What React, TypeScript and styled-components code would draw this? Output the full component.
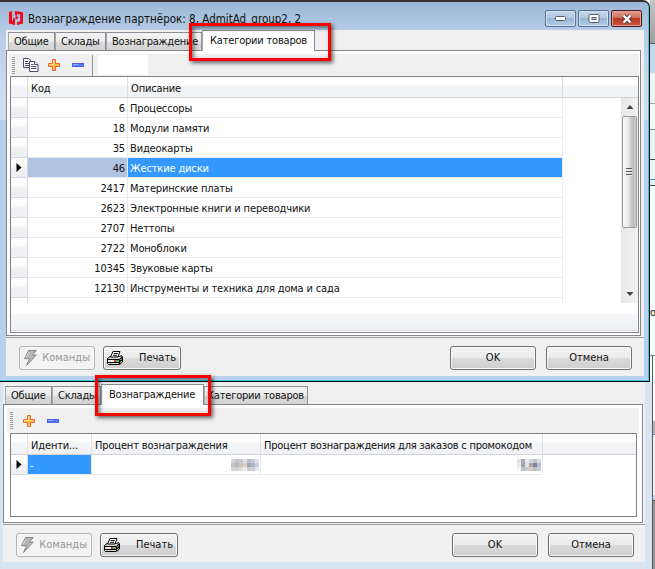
import React from 'react';
import styled, { createGlobalStyle, css } from 'styled-components';

const GlobalStyle = createGlobalStyle`
  *, *::before, *::after { box-sizing: border-box; }
  body { margin: 0; overflow: hidden; background: #fff; }
  #root { font: 11px/14px "DejaVu Sans Condensed", "DejaVu Sans", sans-serif; font-stretch: condensed; color: #111; }
`;

const Desktop = styled.div`
  position: relative;
  width: 655px;
  height: 569px;
  overflow: hidden;
  background: #fff;
`;

/* ---------- sliver of the windows lying behind ---------- */

const Backdrop = styled.div`
  position: absolute;
  top: 0;
  right: 0;
  width: 5px;
  height: 569px;
  display: flex;
  flex-direction: column;
`;

const Strip = styled.div<{ $h: number; $bg: string; $line?: string; $edge?: boolean }>`
  flex: none;
  height: ${p => p.$h}px;
  background: ${p => p.$bg};
  border-bottom: 1px solid ${p => p.$line || 'transparent'};
  overflow: hidden;
  line-height: 14px;
  ${p => p.$edge && css`margin-left: 2px; border-left: 1px solid #55585c;`}
`;

/* ---------- windows ---------- */

const MainWindow = styled.section`
  position: absolute;
  left: 0;
  top: 0;
  width: 650px;
  height: 382px;
  display: flex;
  flex-direction: column;
  padding: 0 5px 5px 6px;
  border: solid #07080a;
  border-width: 2px 1px 1px 0;
  border-top-color: #392f34;
  border-top-right-radius: 7px;
  box-shadow: inset -1px -1px 0 #35cfdf;
  background: linear-gradient(#9cb7d3 0, #a5bfdc 12px, #b5cbe5 28px, #cbdcef 88px, #d0e0f3 117px, #b9d0ec 119px);
`;

const TitleBar = styled.header`
  height: 28px;
  flex: none;
  display: flex;
  align-items: flex-start;
  padding: 7px 2px 0 2px;
`;

const Title = styled.h1`
  margin: 1px 0 0 4px;
  flex: 1;
  font: inherit;
  font-size: 11.5px;
  line-height: 18px;
  white-space: nowrap;
`;

const Controls = styled.div`
  display: flex;
  gap: 2px;
  margin-top: 1px;
`;

const Control = styled.button<{ $danger?: boolean }>`
  width: 31px;
  height: 17px;
  padding: 0;
  display: grid;
  place-items: center;
  border: 1px solid ${p => (p.$danger ? '#4d1721' : '#5b708c')};
  border-radius: 2px;
  box-shadow: inset 0 0 0 1px ${p => (p.$danger ? '#e3a194' : '#d2e1f2')};
  background: ${p =>
    p.$danger
      ? 'linear-gradient(#e09a8b 0, #cf6f5c 46%, #b53823 50%, #cb5740 100%)'
      : 'linear-gradient(#c3d5e9 0, #b2c9e2 46%, #96b3d2 50%, #b3cde8 100%)'};
`;

const Client = styled.div`
  flex: 1;
  min-height: 0;
  display: flex;
  flex-direction: column;
  background: #f0f0f0;
`;

const BackWindow = styled.section`
  position: absolute;
  left: 0;
  top: 382px;
  width: 653px;
  height: 187px;
  padding: 0 7px 7px 3px;
  display: flex;
  border-right: 1px solid #55585c;
  background: #d8e4f2;
`;

/* ---------- tabs ---------- */

const Tabs = styled.nav<{ $h: number; $left: number }>`
  height: ${p => p.$h}px;
  flex: none;
  display: flex;
  align-items: flex-end;
  padding-left: ${p => p.$left}px;
`;

const Tab = styled.button<{ $w: number; $active?: boolean; $track?: number; $indent?: number }>`
  width: ${p => p.$w}px;
  height: 18px;
  padding: 1px 0 0 ${p => p.$indent ?? 5}px;
  border: 1px solid #8b8e96;
  border-bottom: 0;
  border-left-color: #a5a7ad;
  background: linear-gradient(#f3f3f3 0, #ebebeb 50%, #dcdcdc 52%, #d1d1d1 100%);
  font: inherit;
  letter-spacing: ${p => p.$track ?? -0.2}px;
  text-align: left;
  white-space: nowrap;
  color: #111;
  ${p =>
    p.$active &&
    css`
      position: relative;
      z-index: 1;
      height: 21px;
      margin-bottom: -1px;
      padding: 0 0 1px 7px;
      background: #fff;
    `}
`;

const Panel = styled.div<{ $w: number; $h: number; $pad: string }>`
  width: ${p => p.$w}px;
  height: ${p => p.$h}px;
  padding: ${p => p.$pad};
  flex: none;
  display: flex;
  flex-direction: column;
  border: 1px solid #85878d;
  background: #fff;
`;

const Toolbar = styled.div<{ $h: number }>`
  height: ${p => p.$h}px;
  flex: none;
  display: flex;
  align-items: center;
  padding-left: 3px;
  background: #f0f0f0;
`;

const Grip = styled.i<{ $mr: number }>`
  width: 3px;
  height: 17px;
  margin-right: ${p => p.$mr}px;
  background: repeating-linear-gradient(#9b9b9b 0 1px, #f0f0f0 1px 2px);
`;

const ToolIcon = styled.span<{ $mr: number }>`
  display: flex;
  margin-right: ${p => p.$mr}px;
`;

const Divider = styled.i`
  width: 1px;
  height: 21px;
  background: #8f8f8f;
`;

const SearchField = styled.i`
  width: 50px;
  height: 20px;
  margin-left: 5px;
  background: #fff;
`;

/* ---------- grids ---------- */

const Table = styled.div<{ $h: number; $cols: string; $ml: number; $mr: number }>`
  --cols: ${p => p.$cols};
  height: ${p => p.$h}px;
  margin: 0 ${p => p.$mr}px 0 ${p => p.$ml}px;
  flex: none;
  display: flex;
  flex-direction: column;
  border: 1px solid #7f828a;
  background: #fff;
`;

const Head = styled.div`
  height: 21px;
  flex: none;
  display: grid;
  grid-template-columns: var(--cols) 1fr;
  border-bottom: 1px solid #d2d4d7;
  background: linear-gradient(#fff 0, #fcfcfd 38%, #f2f4f6 45%, #eff1f4 100%);
`;

const HeadCell = styled.div<{ $track?: number }>`
  padding: 5px 0 0 3px;
  border-right: 1px solid #dcdee2;
  letter-spacing: ${p => p.$track ?? -0.15}px;
  white-space: nowrap;
  overflow: hidden;
  &:last-child { border: 0; }
`;

const Body = styled.div`
  display: flex;
  height: 205px;
  overflow: hidden;
`;

const Rows = styled.div`
  flex: 1;
`;

const Row = styled.div`
  display: grid;
  grid-template-columns: var(--cols) 1fr;
  height: 20px;
`;

const Marker = styled.div`
  display: flex;
  align-items: center;
  justify-content: center;
  border: solid #d5d7db;
  border-width: 0 1px 1px 0;
  background: linear-gradient(#fff 0, #fafafb 45%, #f0f1f3 52%, #eeeff2 100%);
`;

const Cell = styled.div<{ $tone?: 'pale' | 'blue'; $right?: boolean; $track?: number }>`
  padding: 4px 2px 0;
  border: solid #e8e9ec;
  border-width: 0 1px 1px 0;
  letter-spacing: ${p => p.$track ?? -0.15}px;
  white-space: nowrap;
  ${p => p.$right && css`display: flex; justify-content: flex-end;`}
  ${p => p.$tone === 'pale' && css`background: #afc2df;`}
  ${p => p.$tone === 'blue' && css`background: #3399ff; color: #fff;`}
`;

const Summary = styled.div`
  flex: none;
  height: 18px;
  margin: 10px 1px 0 0;
  background: linear-gradient(#f6f7f8, #eff1f4);
  border-bottom: 1px solid #d9dbdf;
`;

const Scrollbar = styled.div`
  width: 17px;
  display: flex;
  flex-direction: column;
  padding: 0 1px 0 1px;
  background: linear-gradient(90deg, #e7e7e7, #f2f2f2);
`;

const ScrollArrow = styled.span<{ $end?: boolean }>`
  height: 18px;
  display: grid;
  place-items: center;
  margin-top: ${p => (p.$end ? 'auto' : 0)};
`;

const Thumb = styled.div`
  height: 112px;
  display: grid;
  place-items: center;
  border: 1px solid #9a9a9a;
  border-radius: 2px;
  background: linear-gradient(90deg, #f7f7f7 0, #e8e8e8 45%, #cfcfd1 55%, #bebec2 80%, #d2d2d4 100%);
`;

const Mosaic = styled.div<{ $cols: number }>`
  width: ${p => p.$cols * 4}px;
  height: 12px;
  margin-right: -1px;
  display: grid;
  grid-template-columns: repeat(${p => p.$cols}, 4px);
  grid-auto-rows: 4px;
`;

const Tile = styled.i<{ $c: string }>`
  background: ${p => p.$c};
`;

/* ---------- footer ---------- */

const Footer = styled.footer<{ $pad: string }>`
  flex: 1;
  margin-top: 1px;
  display: flex;
  padding: ${p => p.$pad};
  border-top: 1px solid #9b9da2;
`;

const PushButton = styled.button<{ $w: number; $ml?: string; $muted?: boolean; $icon?: boolean }>`
  width: ${p => p.$w}px;
  height: 24px;
  margin-left: ${p => p.$ml ?? '0'};
  padding: 0 ${p => (p.$icon ? '4px 0 2px' : 0)};
  flex: none;
  display: flex;
  align-items: center;
  justify-content: ${p => (p.$icon ? 'space-between' : 'center')};
  border: 1px solid ${p => (p.$muted ? '#b3b5b9' : '#707070')};
  border-radius: 3px;
  box-shadow: inset 0 0 0 1px #f9f9f9;
  background: ${p => (p.$muted ? '#f3f3f3' : 'linear-gradient(#f3f3f3 0, #ebebeb 48%, #dadada 52%, #cecece 100%)')};
  font: inherit;
  color: ${p => (p.$muted ? '#989898' : '#111')};
`;

const Callout = styled.div<{ $x: number; $y: number; $w: number; $h: number }>`
  position: absolute;
  z-index: 3;
  left: ${p => p.$x}px;
  top: ${p => p.$y}px;
  width: ${p => p.$w}px;
  height: ${p => p.$h}px;
  border: 3px solid #fb0000;
  box-shadow: 2px 2px 4px rgba(0, 0, 0, 0.6), inset 2px 2px 4px rgba(0, 0, 0, 0.5);
  pointer-events: none;
`;

/* ---------- icons ---------- */

const Logo = () => (
  <svg width="16" height="17" viewBox="0 0 16 17" fill="#f4091b">
    <path d="M1 3L4 2V11.5L5 12V9L7 9.8V16L1 14.5z" />
    <path d="M7 2L15 3.2V14.5L9 16V13.2L12.2 12.2V5.6L9 5V7L7 6.3z" />
    <path d="M8.6 7L10.4 8.8L8.6 10.6L6.8 8.8z" />
  </svg>
);

const Copy = () => (
  <svg width="16" height="14" viewBox="0 0 16 14" fill="#fff" stroke="#4b4b74">
    <path d="M.5.5h5.3l2.7 2.7v6.3h-8z" />
    <path d="M2 3.5h3M2 5.5h5M2 7.5h5" />
    <path d="M6.5 3.5h5.2l3.3 3v7H6.5z" />
    <path d="M11.5 3.5v3H15M8 6.5h2.5M8 8.5h5.5M8 10.5h5.5" />
  </svg>
);

const Plus = () => (
  <svg width="12" height="12" viewBox="0 0 12 12">
    <path d="M4.5.5h3v4h4v3h-4v4h-3v-4h-4v-3h4z" fill="#ffc344" stroke="#f2603c" />
    <path d="M5.5 1v4.5H1" fill="none" stroke="#ffe081" />
  </svg>
);

const Minus = () => (
  <svg width="12" height="4" viewBox="0 0 12 4">
    <rect x=".5" y=".5" width="11" height="3" fill="#517dff" stroke="#5558ee" />
    <path d="M1 1.5h5" stroke="#7fb4ff" />
  </svg>
);

const Bolt = () => (
  <svg width="17" height="18" viewBox="0 0 17 18">
    <path d="M6.5 1.5h7.7L10.5 6h3.8L4.5 16.5l3-6.8H2.5z" fill="#b5b5b5" stroke="#898989" />
    <path d="M7 3L4 8.5" stroke="#ddd" />
  </svg>
);

const Printer = () => (
  <svg width="18" height="16" viewBox="0 0 18 16">
    <path d="M1.5 8.5L4 6.5h9.5l2-1 1 1.5v5l-3 2.5h-11l-1-1z" fill="#d8d8d0" stroke="#000" />
    <path d="M4.5 7L7 1.5h7L12 7z" fill="#fff" stroke="#000" />
    <path d="M7.7 3.5h4M7 5.3h4" stroke="#111" />
    <path d="M2 9.5h11.5M2 12.5h11.5M13.5 9.5v4.5M14 9l2.5-2M14 11.5l2.5-2" stroke="#000" strokeWidth="1.2" />
    <path d="M3 11h5" stroke="#fff" />
    <path d="M8 11h2.5" stroke="#e21818" strokeWidth="1.8" />
    <path d="M10.5 11h2.5" stroke="#1fc63e" strokeWidth="1.8" />
  </svg>
);

const Pointer = () => (
  <svg width="6" height="9" viewBox="0 0 6 9"><path d="M.5 0v9L5.5 4.5z" fill="#000" /></svg>
);

const Arrow = ({ down }: { down?: boolean }) => (
  <svg width="8" height="4" viewBox="0 0 8 4"><path d={down ? 'M.5 0h7L4 4z' : 'M.5 4h7L4 0z'} fill="#404040" /></svg>
);

/* ---------- data ---------- */

const goods: [number, string][] = [
  [6, 'Процессоры'],
  [18, 'Модули памяти'],
  [35, 'Видеокарты'],
  [46, 'Жесткие диски'],
  [2417, 'Материнские платы'],
  [2623, 'Электронные книги и переводчики'],
  [2707, 'Неттопы'],
  [2722, 'Моноблоки'],
  [10345, 'Звуковые карты'],
  [12130, 'Инструменты и техника для дома и сада'],
];

const tilesA = ['#d6d3d3', '#bcc4cf', '#c7cbd1', '#dfdfdf', '#b5bfcc', '#c5cad8', '#dee5ef',
  '#c9c2bc', '#b3b8c0', '#c9c6c2', '#d6cfc6', '#a9a9ac', '#aab6d0', '#c3d2e6',
  '#d6d3ce', '#ccd0d7', '#dedcda', '#eeeae5', '#c9cbd0', '#c9cfd9', '#e3e7ee'];
const tilesB = ['#e5e2df', '#aaa9b6', '#e3e6ec', '#d0d5de', '#bfc2cd', '#d7dae2',
  '#eee9e5', '#9e9fb0', '#dbe2eb', '#b7a999', '#7f87a0', '#b9bfce',
  '#f4f2f0', '#c2c1c8', '#c5cad4', '#d4cdc3', '#b8bfcf', '#c9c9d0'];

const App = () => (
  <>
    <GlobalStyle />
    <Desktop>
      <Backdrop>
        <Strip $h={44} $bg="linear-gradient(#c5c5c5, #9e9e9e)" $line="#5d5d5d" />
        <Strip $h={60} $bg="linear-gradient(#c6d6e9 0 28px, #f3f3f3 30px)" $line="#a9a9a9" />
        <Strip $h={26} $bg="#fafafa" $line="#909090" />
        <Strip $h={30} $bg="#f0f0f0" $line="#454545" />
        <Strip $h={20} $bg="#f3f3f3" $line="#3f8fda" />
        <Strip $h={6} $bg="#f0f0f0" $line="#333" />
        <Strip $h={120} $bg="#fff" />
        <Strip $h={14} $bg="#fff">о</Strip>
        <Strip $h={36} $bg="#fff" $line="#777" />
        <Strip $h={65} $bg="#fff" $edge />
        <Strip $h={14} $bg="#b4b4b4" $line="#4489d0" />
        <Strip $h={60} $bg="#f0f0f0" />
        <Strip $h={6} $bg="#c7daf0" $line="#444" />
        <Strip $h={68} $bg="#989898" />
      </Backdrop>

      <BackWindow>
        <Client>
          <Tabs $h={22} $left={2}>
            <Tab $w={47}>Общие</Tab>
            <Tab $w={49}>Склады</Tab>
            <Tab $w={103} $active>Вознаграждение</Tab>
            <Tab $w={104} $indent={2}>Категории товаров</Tab>
          </Tabs>
          <Panel $w={640} $h={119} $pad="3px 3px 0 3px">
            <Toolbar $h={25}>
              <Grip $mr={10} />
              <ToolIcon $mr={12}><Plus /></ToolIcon>
              <ToolIcon $mr={0}><Minus /></ToolIcon>
            </Toolbar>
            <Table $h={84} $cols="17px 64px 169px 282px" $ml={3} $mr={2}>
              <Head>
                <HeadCell />
                <HeadCell>Иденти...</HeadCell>
                <HeadCell>Процент вознаграждения</HeadCell>
                <HeadCell $track={-0.22}>Процент вознаграждения для заказов с промокодом</HeadCell>
                <HeadCell />
              </Head>
              <Row>
                <Marker><Pointer /></Marker>
                <Cell $tone="blue">-</Cell>
                <Cell $right><Mosaic $cols={7}>{tilesA.map((c, i) => <Tile key={i} $c={c} />)}</Mosaic></Cell>
                <Cell $right><Mosaic $cols={6}>{tilesB.map((c, i) => <Tile key={i} $c={c} />)}</Mosaic></Cell>
              </Row>
            </Table>
          </Panel>
          <Footer $pad="8px 11px 0 13px">
            <PushButton $w={76} $muted $icon><Bolt />Команды</PushButton>
            <PushButton $w={78} $ml="8px" $icon><Printer />Печать</PushButton>
            <PushButton $w={86} $ml="auto">OK</PushButton>
            <PushButton $w={86} $ml="10px">Отмена</PushButton>
          </Footer>
        </Client>
      </BackWindow>

      <MainWindow>
        <TitleBar>
          <Logo />
          <Title>Вознаграждение партнёрок: 8, AdmitAd_group2, 2</Title>
          <Controls>
            <Control aria-label="Свернуть">
              <svg width="12" height="6"><rect x=".5" y=".5" width="10" height="4" rx="1" fill="#fff" stroke="#59616e" /></svg>
            </Control>
            <Control aria-label="Развернуть">
              <svg width="12" height="10"><rect x="1" y=".5" width="10" height="8" rx="1" fill="#fff" stroke="#59616e" /><rect x="4" y="3.5" width="4" height="2" fill="#a9c1dd" stroke="#59616e" /></svg>
            </Control>
            <Control $danger aria-label="Закрыть">
              <svg width="12" height="10" viewBox="0 0 12 10"><path d="M2.5 1.5l7 7M9.5 1.5l-7 7" stroke="#5e4248" strokeWidth="4" /><path d="M2.5 1.5l7 7M9.5 1.5l-7 7" stroke="#fff" strokeWidth="2.3" /></svg>
            </Control>
          </Controls>
        </TitleBar>
        <Client>
          <Tabs $h={20} $left={2}>
            <Tab $w={47}>Общие</Tab>
            <Tab $w={51}>Склады</Tab>
            <Tab $w={96}>Вознаграждение</Tab>
            <Tab $w={113} $active>Категории товаров</Tab>
          </Tabs>
          <Panel $w={635} $h={286} $pad="3px 1px 0 2px">
            <Toolbar $h={22}>
              <Grip $mr={8} />
              <ToolIcon $mr={9}><Copy /></ToolIcon>
              <ToolIcon $mr={12}><Plus /></ToolIcon>
              <ToolIcon $mr={8}><Minus /></ToolIcon>
              <Divider />
              <SearchField />
            </Toolbar>
            <Table $h={257} $cols="17px 100px 435px" $ml={1} $mr={0}>
              <Head>
                <HeadCell />
                <HeadCell>Код</HeadCell>
                <HeadCell>Описание</HeadCell>
                <HeadCell />
              </Head>
              <Body>
                <Rows>
                  {goods.map(([code, name]) => (
                    <Row key={code}>
                      <Marker>{code === 46 && <Pointer />}</Marker>
                      <Cell $right $tone={code === 46 ? 'pale' : undefined}>{code}</Cell>
                      <Cell $tone={code === 46 ? 'blue' : undefined}>{name}</Cell>
                    </Row>
                  ))}
                  <Row><Marker /><Cell /><Cell /></Row>
                </Rows>
                <Scrollbar>
                  <ScrollArrow><Arrow /></ScrollArrow>
                  <Thumb>
                    <svg width="7" height="8"><path d="M0 .5h6M0 3.5h6M0 6.5h6" stroke="#555" /><path d="M0 1.5h6M0 4.5h6M0 7.5h6" stroke="#eee" /></svg>
                  </Thumb>
                  <ScrollArrow $end><Arrow down /></ScrollArrow>
                </Scrollbar>
              </Body>
              <Summary />
            </Table>
          </Panel>
          <Footer $pad="8px 12px 0 13px">
            <PushButton $w={76} $muted $icon><Bolt />Команды</PushButton>
            <PushButton $w={78} $ml="8px" $icon><Printer />Печать</PushButton>
            <PushButton $w={86} $ml="auto">OK</PushButton>
            <PushButton $w={86} $ml="10px">Отмена</PushButton>
          </Footer>
        </Client>
      </MainWindow>

      <Callout $x={189} $y={23} $w={142} $h={38} />
      <Callout $x={95} $y={375} $w={116} $h={41} />
    </Desktop>
  </>
);

export default App;
